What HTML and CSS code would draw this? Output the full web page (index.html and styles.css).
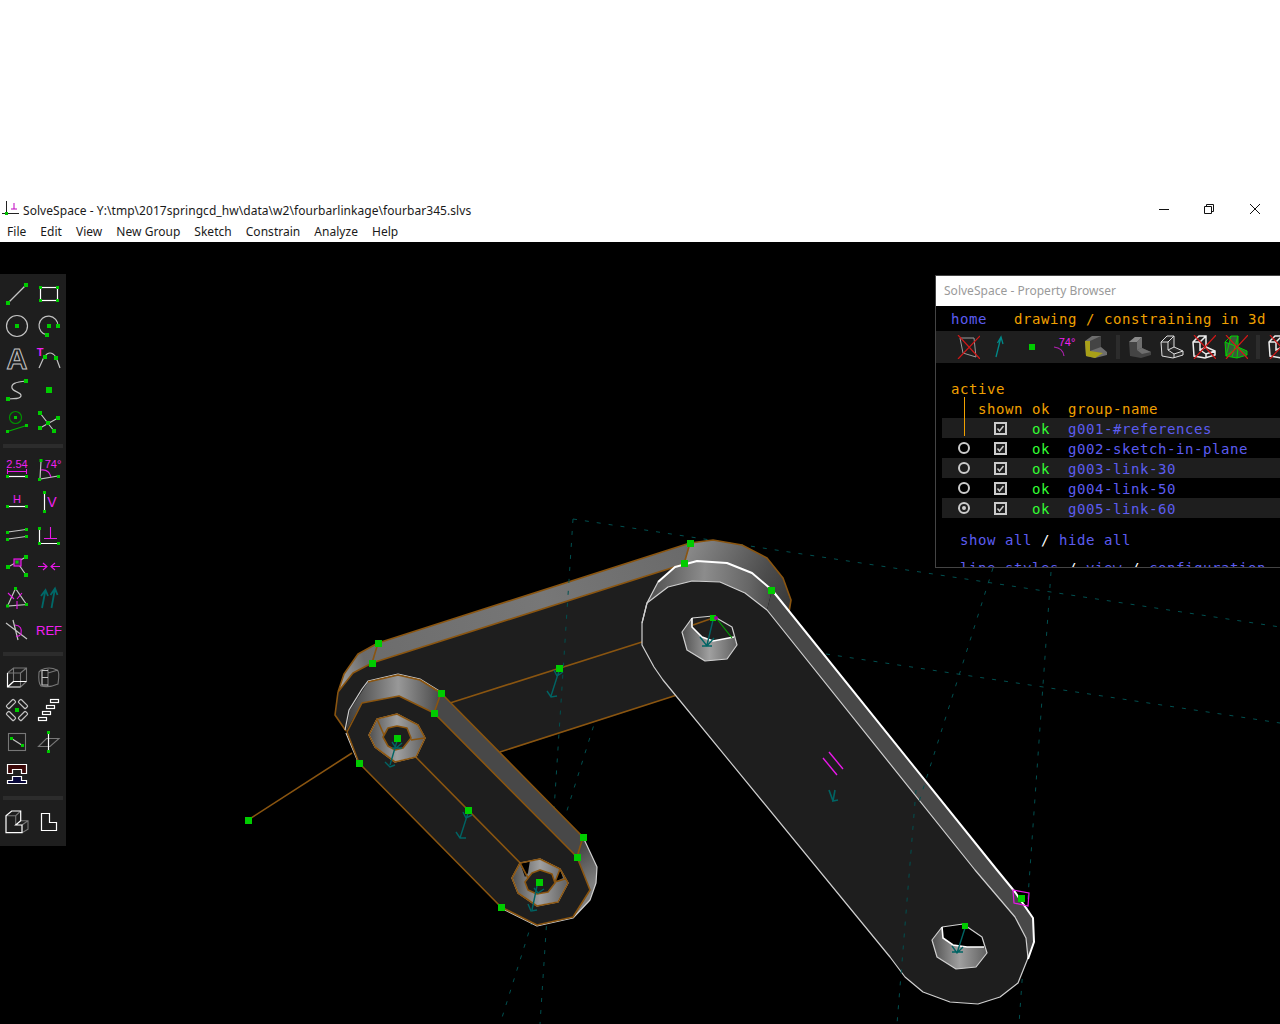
FILE: index.html
```html
<!DOCTYPE html>
<html lang="en">
<head>
<meta charset="utf-8">
<title>SolveSpace</title>
<link rel="stylesheet" href="styles.css">
</head>
<body>
<div class="blank"></div>
<div class="titlebar">
  <svg class="appicon" viewBox="0 0 20 20" width="20" height="20"><path class="ai-k" d="M5.500 1V15M1 13.500H18"/><path class="ai-m" d="M10 9H16M13 3V9"/><rect class="ai-g" x="4" y="12" width="3" height="3"/></svg>
  <span class="title">SolveSpace - Y:\tmp\2017springcd_hw\data\w2\fourbarlinkage\fourbar345.slvs</span>
  <div class="controls">
    <svg viewBox="0 0 10 10" width="10" height="10"><path class="wc" d="M0 5.500H10"/></svg>
    <svg class="wc-mid" viewBox="0 0 10 10" width="10" height="10"><path class="wc" d="M.5 2.500H7.500V9.500H.5ZM2.500 2.500V.5H9.500V7.500H7.500"/></svg>
    <svg viewBox="0 0 10 10" width="10" height="10"><path class="wc" d="M0 0L10 10M10 0L0 10"/></svg>
  </div>
</div>
<nav class="menu">
  <span>File</span><span>Edit</span><span>View</span><span>New Group</span><span>Sketch</span><span>Constrain</span><span>Analyze</span><span>Help</span>
</nav>
<main class="canvas">
  <svg class="scene" viewBox="0 242 1280 782" width="1280" height="782">
    <defs>
      <linearGradient id="gTop" gradientUnits="userSpaceOnUse" x1="340" y1="700" x2="690" y2="560"><stop offset="0" stop-color="#aaa"/><stop offset=".1" stop-color="#6c6c6c"/><stop offset=".6" stop-color="#777"/><stop offset="1" stop-color="#6a6a6a"/></linearGradient>
      <linearGradient id="gEnd" gradientUnits="userSpaceOnUse" x1="690" y1="550" x2="790" y2="600"><stop offset="0" stop-color="#888"/><stop offset=".7" stop-color="#4c4c4c"/><stop offset="1" stop-color="#3a3a3a"/></linearGradient>
      <linearGradient id="gArc" gradientUnits="userSpaceOnUse" x1="645" y1="580" x2="775" y2="590"><stop offset="0" stop-color="#4a4a4a"/><stop offset=".45" stop-color="#8c8c8c"/><stop offset=".8" stop-color="#666"/><stop offset="1" stop-color="#484848"/></linearGradient>
      <linearGradient id="gArc2" gradientUnits="userSpaceOnUse" x1="346" y1="700" x2="441" y2="700"><stop offset="0" stop-color="#3c3c3c"/><stop offset=".55" stop-color="#989898"/><stop offset="1" stop-color="#484848"/></linearGradient>
      <linearGradient id="gEnd2" gradientUnits="userSpaceOnUse" x1="578" y1="850" x2="598" y2="880"><stop offset="0" stop-color="#484848"/><stop offset="1" stop-color="#808080"/></linearGradient>
      <linearGradient id="gHole" x1="0" y1="0" x2="1" y2="0"><stop offset="0" stop-color="#505050"/><stop offset=".5" stop-color="#a0a0a0"/><stop offset="1" stop-color="#606060"/></linearGradient>
    </defs>

    <path class="grid" d="M573 519L1280 627M826 654L1280 723M1051 572L1019 1024M597 715L500 1024"/>
    <path class="bro" d="M248 820L352 753"/>

    <!-- link 50 -->
    <polygon class="face" points="372,663 684,564 700,650 678,695 440,772 360,763 346,731 335,715 338,692 353,673"/>
    <polygon fill="url(#gTop)" points="378,643 690,543 684,564 372,663 353,673 338,692 344,674 358,654"/>
    <polygon fill="url(#gEnd)" points="690,543 713,540 742,545 767,558 783,578 791,600 789,612 771,590 696,561 684,564"/>
    <path class="bro" d="M338 692L344 674L358 654L378 643L690 543L713 540L742 545L767 558L783 578L791 600L789 612M378 643L372 663L684 564L690 543M372 663L353 673L338 692L335 715L346 731M450 703L642 642M500 752L677 695"/>
    <path class="grid" d="M573 519L540 1024"/>

    <!-- link 60 -->
    <polygon class="face" points="642,623 647,603 668,587 692,581 720,582 745,593 767,610 975,870 1015,917 1026,938 1028,958 1018,983 1000,997 978,1004 950,1002 923,992 905,977 890,957 663,680 654,667 642,645"/>
    <polygon fill="url(#gArc)" points="642,623 647,603 658,582 675,567 697,561 727,563 752,573 772,590 767,610 745,593 720,582 692,581 668,587 647,603"/>
    <polygon class="strip" points="772,590 997,870 1015,892 1033,918 1034,942 1028,959 1026,938 1015,917 975,870 767,610"/>
    <polyline class="thin" points="642,623 647,603 668,587 692,581 720,582 745,593 767,610 975,870 1015,917 1026,938 1028,958 1018,983 1000,997 978,1004 950,1002 923,992 905,977 890,957 663,680 654,667 642,645 642,623"/>
    <polyline class="thick" points="658,582 675,567 697,561 727,563 752,573 772,590 997,870 1015,892 1033,918 1034,942 1028,959"/>
    <polyline class="thin" points="642,623 647,603 658,582"/>
    <path class="grid" d="M993 568L918 805M916 790L897 1024"/>

    <polygon fill="url(#gHole)" points="692,618 682,632 687,650 705,661 727,659 737,645 734,637 713,641 702,637 692,627"/>
    <polygon class="face" points="692,618 713,616 732,627 734,637 713,641 702,637 692,627"/>
    <polyline class="thin" points="692,618 682,632 687,650 705,661 727,659 737,645 732,627 713,616 692,618"/>
    <polyline class="thick-s" points="692,618 692,627 702,637 713,641 734,637"/>
    <path class="bro" d="M693 625L713 618"/>
    <path class="gl" d="M717 619L732 638"/>
    <path class="ar" d="M713 620L707 645M700 637L707 646L714 638M702 646H712"/>
    <rect class="pt" x="710" y="615" width="6" height="6"/><circle class="mg" cx="716" cy="618" r="2"/>

    <polygon fill="url(#gHole)" points="942,927 932,940 937,957 956,969 976,967 987,953 984,947 967,947 943,938"/>
    <polygon class="blk" points="942,927 963,924 982,937 984,947 967,947 953,945 943,938"/>
    <polyline class="thin" points="942,927 932,940 937,957 956,969 976,967 987,953 982,937 963,924 942,927"/>
    <polyline class="thick-s" points="942,927 943,938 953,945 967,947 984,947"/>
    <path class="ar" d="M965 928L957 953M952 946L957 953L963 947M952 952H963"/>
    <rect class="pt" x="962" y="923" width="6" height="6"/>

    <path class="mgl" d="M823 758L837 775M829 752L843 769"/>
    <path class="ar1" d="M829 790L833 801M835 790L833 801L838 800"/>
    <polygon class="mgb" points="1013,890 1029,893 1028,906 1014,903"/>

    <!-- link 30 -->
    <polygon class="face" points="347,732 362,703 399,696 434,713 577,857 590,890 573,917 537,925 501,907 359,763"/>
    <polygon fill="url(#gArc2)" points="346,731 350,710 363,690 368,682 398,675 420,680 441,693 434,713 399,696 362,703"/>
    <polygon class="strip" points="441,693 583,837 577,857 434,713"/>
    <polygon fill="url(#gEnd2)" points="583,837 597,867 596,883 590,900 573,918 590,890 577,857"/>
    <path class="thin" d="M345 730L349 710L362 689L368 681L398 674L420 679L441 692M583 837L597 867L596 883L590 900L573 918L537 926L501 908M359 764L346 733"/>
    <path class="bro" d="M347 732L362 703L399 696L434 713L577 857L590 890L573 917L537 925L501 907L359 763L347 732M441 693L583 837L577 857M441 693L434 713M368 682L398 675L420 680L441 693M397 738L539 882"/>

    <polygon fill="url(#gHole)" points="369,735 377,719 397,714 418,725 425,738 416,757 395,762 375,747"/>
    <polygon class="face" points="383,737 388,728 397,726 407,728 411,738 403,748 395,750 388,746"/>
    <path class="thin" d="M369 735L377 719L397 714L418 725L425 738L416 757L395 762L375 747Z"/>
    <path class="bro" d="M369 735L377 719L397 714L418 725L425 738L416 757L395 762L375 747ZM383 737L388 728L397 726L407 728L411 738L403 748L395 750L388 746ZM377 719L384 735M418 725L425 738L411 740"/>
    <path class="ar" d="M397 741L390 765M385 762L390 767L395 765M392 742L396 748L402 743M392 748H402"/>
    <rect class="pt" x="394" y="735" width="7" height="7"/>

    <polygon fill="url(#gHole)" points="512,878 520,863 540,859 560,869 568,883 558,902 537,906 518,893"/>
    <polygon class="blk" points="520,863 530,860 528,873 525,877"/>
    <polygon class="blk" points="560,869 555,882 563,878"/>
    <polygon class="face" points="525,882 532,873 540,870 552,874 555,883 548,892 537,894 528,890"/>
    <path class="thin" d="M512 878L520 863L540 859L560 869L568 883L558 902L537 906L518 893Z"/>
    <path class="bro" d="M512 878L520 863L540 859L560 869L568 883L558 902L537 906L518 893ZM525 882L532 873L540 870L552 874L555 883L548 892L537 894L528 890ZM520 863L528 878M560 869L555 882L565 879"/>
    <path class="ar" d="M537 886L532 910M528 904L531 911L537 910M534 888L538 893L544 889"/>
    <rect class="pt" x="536" y="879" width="7" height="7"/>

    <path class="ar" d="M468 813L460 838M456 832L460 838L466 838M463 812L466 818L472 815"/>
    <path class="ar" d="M559 671L551 696M547 691L551 697L557 696M554 670L557 676L563 672"/>

    <rect class="pt" x="245" y="817" width="7" height="7"/>
    <rect class="pt" x="687" y="540" width="7" height="7"/>
    <rect class="pt" x="681" y="560" width="7" height="7"/>
    <rect class="pt" x="375" y="640" width="7" height="7"/>
    <rect class="pt" x="369" y="660" width="7" height="7"/>
    <rect class="pt" x="768" y="587" width="7" height="7"/>
    <rect class="pt" x="438" y="690" width="7" height="7"/>
    <rect class="pt" x="431" y="710" width="7" height="7"/>
    <rect class="pt" x="356" y="760" width="7" height="7"/>
    <rect class="pt" x="556" y="665" width="7" height="7"/>
    <rect class="pt" x="465" y="807" width="7" height="7"/>
    <rect class="pt" x="580" y="834" width="7" height="7"/>
    <rect class="pt" x="574" y="854" width="7" height="7"/>
    <rect class="pt" x="498" y="904" width="7" height="7"/>
    <rect class="pt" x="1018" y="895" width="7" height="7"/>
  </svg>

  <aside class="toolbar">
    <div class="tgroup">
      <svg viewBox="0 0 32 32"><path class="ic" d="M7 25L25 7"/><rect class="pt" x="5" y="23" width="4" height="4"/><rect class="pt" x="23" y="5" width="4" height="4"/></svg>
      <svg viewBox="0 0 32 32"><rect class="iw" x="7.500" y="9.500" width="17" height="13"/><rect class="pt" x="6" y="8" width="3" height="3"/><rect class="pt" x="23" y="8" width="3" height="3"/><rect class="pt" x="6" y="21" width="3" height="3"/><rect class="pt" x="23" y="21" width="3" height="3"/></svg>
      <svg viewBox="0 0 32 32"><circle class="ic" cx="16" cy="16" r="10.500"/><rect class="pt" x="14" y="14" width="4" height="4"/></svg>
      <svg viewBox="0 0 32 32"><path class="ic" d="M25 16A9.500 9.500 0 1 0 14 25"/><rect class="pt" x="14" y="14" width="4" height="4"/><rect class="pt" x="23" y="14" width="4" height="4"/><rect class="pt" x="12" y="23" width="4" height="4"/></svg>
      <svg viewBox="0 0 32 32"><text class="ta" x="16" y="27">A</text></svg>
      <svg viewBox="0 0 32 32"><text class="tm tt" x="7" y="14">T</text><path class="ic" d="M6 26L11 15Q17 7 23 15L27 26"/><rect class="pt" x="10" y="13" width="4" height="4"/><rect class="pt" x="21" y="14" width="4" height="4"/></svg>
      <svg viewBox="0 0 32 32"><path class="ic" d="M25 7C14 8 10 10 11 14C12 18 21 18 20 22C19 26 12 24 7 25"/><rect class="pt" x="23" y="5" width="4" height="4"/><rect class="pt" x="5" y="23" width="4" height="4"/></svg>
      <svg viewBox="0 0 32 32"><rect class="pt" x="13" y="13" width="6" height="6"/></svg>
      <svg viewBox="0 0 32 32"><circle class="idg" cx="14.500" cy="11.500" r="6"/><rect class="pt" x="13" y="10" width="3" height="3"/><path class="igl" d="M6.500 25.500L25.500 19.500"/><rect class="pt" x="5" y="24" width="3" height="3"/><rect class="pt" x="24" y="18" width="3" height="3"/></svg>
      <svg viewBox="0 0 32 32"><path class="ic" d="M7 7L21 25M25 12L7 22"/><rect class="pt" x="5" y="5" width="4" height="4"/><rect class="pt" x="23" y="10" width="4" height="4"/><rect class="pt" x="5" y="20" width="4" height="4"/><rect class="pt" x="19" y="23" width="4" height="4"/><rect class="pt" x="13" y="15" width="4" height="4"/></svg>
    </div>
    <div class="tsep"></div>
    <div class="tgroup">
      <svg viewBox="0 0 32 32"><text class="tm ts" x="16" y="14">2.54</text><path class="im" d="M6.500 15V20M25.500 15V20M6.500 17.500H25.500"/><path class="iw" d="M7 22.500H25"/><rect class="pt" x="5" y="21" width="3" height="3"/><rect class="pt" x="24" y="21" width="3" height="3"/></svg>
      <svg viewBox="0 0 32 32"><path class="ic" d="M8 7L7 25L25 22"/><path class="im" d="M8 16Q16 15 18 23"/><text class="tm ts" x="20" y="14">74°</text><rect class="pt" x="6.500" y="5" width="3" height="3"/><rect class="pt" x="5" y="24" width="3" height="3"/><rect class="pt" x="24" y="21" width="3" height="3"/></svg>
      <svg viewBox="0 0 32 32"><text class="tm ts" x="16" y="17">H</text><path class="iw" d="M7 20.500H25"/><rect class="pt" x="5" y="19" width="3" height="3"/><rect class="pt" x="24" y="19" width="3" height="3"/></svg>
      <svg viewBox="0 0 32 32"><path class="iw" d="M11.500 7V25"/><text class="tm tv" x="19" y="21">V</text><rect class="pt" x="10" y="5" width="3" height="3"/><rect class="pt" x="10" y="24" width="3" height="3"/></svg>
      <svg viewBox="0 0 32 32"><path class="ic" d="M7 14L25 11.500M7 21L25 18.500"/><rect class="pt" x="5" y="13" width="3" height="3"/><rect class="pt" x="24" y="10" width="3" height="3"/><rect class="pt" x="5" y="20" width="3" height="3"/><rect class="pt" x="24" y="17" width="3" height="3"/></svg>
      <svg viewBox="0 0 32 32"><path class="iw" d="M6.500 10V25.500H25"/><path class="im" d="M11 20.500H24M17.500 9V20.500"/><rect class="pt" x="5" y="9" width="3" height="3"/><rect class="pt" x="5" y="24" width="3" height="3"/><rect class="pt" x="24" y="24" width="3" height="3"/></svg>
      <svg viewBox="0 0 32 32"><path class="ic" d="M7 17L25 7M16 12L25 25"/><rect class="imf" x="13" y="9" width="7" height="7"/><rect class="pt" x="14.500" y="10.500" width="3" height="3"/><rect class="pt" x="5" y="15" width="4" height="4"/><rect class="pt" x="23" y="5" width="4" height="4"/><rect class="pt" x="23" y="23" width="4" height="4"/></svg>
      <svg viewBox="0 0 32 32"><path class="im" d="M5 16.500H14M10 13L14 16.500L10 20M27 16.500H18M22 13L18 16.500L22 20"/></svg>
      <svg viewBox="0 0 32 32"><path class="ic" d="M14.500 6.500L6.500 24L25.500 22.500Z"/><path class="im" d="M7 11L13 17M21 11L16 17M16 19V27"/><rect class="pt" x="13" y="5" width="3" height="3"/><rect class="pt" x="5" y="22.500" width="3" height="3"/><rect class="pt" x="24" y="21" width="3" height="3"/></svg>
      <svg viewBox="0 0 32 32"><path class="it" d="M9 26L12.500 8M8 14L12.500 8L15 14M18.500 26L22 6.500M17.500 13L22 6.500L24.500 13"/></svg>
      <svg viewBox="0 0 32 32"><path class="ic" d="M5 9L26 25M12 6L17 26"/><path class="im" d="M14 11Q22 12 20 20Q18 23 15 22"/></svg>
      <svg viewBox="0 0 32 32"><text class="tm tr" x="16" y="21">REF</text></svg>
    </div>
    <div class="tsep"></div>
    <div class="tgroup">
      <svg viewBox="0 0 32 32"><path class="id" d="M6.500 11L12.500 6H25.500V19.500L19.500 25M6.500 11H19.500V25M19.500 11L25.500 6M12.500 6V19.500L6.500 25"/><path class="iw" d="M6.500 11V25H19.500M6.500 25L12.500 19.500H25.500"/></svg>
      <svg viewBox="0 0 32 32"><path class="id" d="M8 8Q16 4 24 8Q27 9 25 22Q16 26 8 24Q5 21 6 10ZM15 7V24M25 8L15 11"/><path class="ic" d="M15 8.500H9V23H15M9 15.500H15"/></svg>
      <svg viewBox="0 0 32 32"><rect class="ic" x="5" y="8" width="10" height="4" rx="1" transform="rotate(-45 10 10)"/><rect class="ic" x="17" y="8" width="10" height="4" rx="1" transform="rotate(45 22 10)"/><rect class="ic" x="5" y="20" width="10" height="4" rx="1" transform="rotate(45 10 22)"/><rect class="ic" x="17" y="20" width="10" height="4" rx="1" transform="rotate(-45 22 22)"/><rect class="pt" x="14" y="14" width="4" height="4"/></svg>
      <svg viewBox="0 0 32 32"><rect class="iw" x="5.500" y="23.500" width="8" height="3"/><rect class="iw" x="9.500" y="17.500" width="8" height="3"/><rect class="iw" x="13.500" y="11.500" width="8" height="3"/><rect class="iw" x="17.500" y="5.500" width="8" height="3"/></svg>
      <svg viewBox="0 0 32 32"><rect class="id" x="7.500" y="7.500" width="17" height="17"/><path class="ic" d="M10.500 12.500L21.500 19.500"/><rect class="pt" x="9" y="11" width="3" height="3"/><rect class="pt" x="20" y="18" width="3" height="3"/></svg>
      <svg viewBox="0 0 32 32"><path class="id" d="M5.500 20.500L13.500 12.500H26L17 20.500Z"/><path class="iw" d="M15.500 7V25"/><rect class="pt" x="14" y="5" width="3" height="3"/><rect class="pt" x="14" y="24" width="3" height="3"/></svg>
      <svg viewBox="0 0 32 32"><path class="ired" d="M6.500 6.500H25.500V15.500H20.500V11.500H11.500V15.500H6.500Z"/><path class="iblu" d="M11.500 18.500H20.500V22.500H25.500V25.500H6.500V22.500H11.500Z"/></svg>
      <span class="tempty"></span>
    </div>
    <div class="tsep"></div>
    <div class="tgroup">
      <svg viewBox="0 0 32 32"><path class="id" d="M5 9.700H14.700L19.700 5M14.700 9.700V19M19.700 14.700H27V23.300L21 26.700M21 19L27 14.700"/><path class="iw" d="M5 9.700L10.700 5H19.700V14.700L14.700 19H21V26.700H5Z"/></svg>
      <svg viewBox="0 0 32 32"><path class="iw" d="M8.500 7.500H16.500V16.500H23.500V24.500H8.500Z"/></svg>
    </div>
  </aside>

  <section class="browser">
    <header class="b-title">SolveSpace - Property Browser</header>
    <div class="b-body">
      <div class="b-nav"><span class="link">home</span><span class="ora b-head">drawing / constraining in 3d</span></div>
      <div class="b-icons">
        <svg viewBox="0 0 24 24"><path class="bg" d="M4 3H18L20 22L7 18Z"/><path class="xr" d="M2 0L24 24M24 1L2 24"/></svg>
        <svg viewBox="0 0 24 24"><path class="bt" d="M8 22L13 2M9.500 8L13 2L15 9"/></svg>
        <svg viewBox="0 0 24 24"><rect class="pt" x="9" y="9" width="6" height="6"/></svg>
        <svg viewBox="0 0 24 24"><path class="bm" d="M2 12Q11 13 12 21"/><text class="tm b74" x="15" y="11">74°</text></svg>
        <svg viewBox="0 0 24 24"><polygon class="s-gr" points="1,6 8,1 17,1 17,12 23,17 23,20 11,23 2,21"/><polygon class="s-dk" points="6,6 17,1 17,12 6,16"/><polygon class="s-yd" points="1,6 6,6 6,16 19,18 11,23 2,21"/></svg>
        <span class="b-sep"></span>
        <svg viewBox="0 0 24 24"><polygon class="s-dk" points="1,7 7,2 14,2 14,13 23,17 23,20 13,23 2,21"/><polygon class="s-lt" points="7,2 14,2 9,7 1,7"/><polygon class="s-gr" points="9,7 14,2 14,13 9,15"/><polygon class="s-gr" points="9,15 14,13 23,17 14,19"/></svg>
        <svg viewBox="0 0 24 24"><path class="s-wh" d="M1 7L7 1H14V12L23 16V20L13 23L2 21ZM1 7H8L14 1M8 7V15L14 12M8 15L14 19L23 16M14 19V23"/></svg>
        <svg viewBox="0 0 24 24"><path class="s-wt" d="M1 7L7 1H14V12L23 16V20L13 23L2 21ZM1 7H8L14 1M8 7V15L14 12M8 15L14 19L23 16M14 19V23"/><path class="xr" d="M2 0L24 24M24 0L2 24"/></svg>
        <svg viewBox="0 0 24 24"><path class="s-gn" d="M1 7L7 1H14V12L23 16V20L13 23L2 21ZM1 7L14 12L2 21L7 1M14 1L8 22M13 23L14 12L23 20"/><path class="xr" d="M2 0L24 24M24 0L2 24"/></svg>
        <span class="b-sep"></span>
        <svg viewBox="0 0 24 24"><path class="s-wt" d="M1 7L7 1H14V12L23 16V20L13 23L2 21ZM1 7H8L14 1M8 7V15L14 12"/><path class="xr" d="M2 0L24 24M24 0L2 24"/></svg>
      </div>
      <div class="b-active ora">active</div>
      <div class="b-row ora"><span></span><span>shown</span><span>ok</span><span>group-name</span></div>
      <div class="b-row alt"><span></span><svg class="cb" viewBox="0 0 13 13"><path class="cb-b" d="M1 1H12V12H1Z"/><path class="cb-t" d="M3.500 6.500L5.500 9L9.500 4"/></svg><span class="ok">ok</span><span class="link">g001-#references</span></div>
      <div class="b-row"><svg class="rb" viewBox="0 0 12 12"><circle class="rb-c" cx="6" cy="6" r="5"/></svg><svg class="cb" viewBox="0 0 13 13"><path class="cb-b" d="M1 1H12V12H1Z"/><path class="cb-t" d="M3.500 6.500L5.500 9L9.500 4"/></svg><span class="ok">ok</span><span class="link">g002-sketch-in-plane</span></div>
      <div class="b-row alt"><svg class="rb" viewBox="0 0 12 12"><circle class="rb-c" cx="6" cy="6" r="5"/></svg><svg class="cb" viewBox="0 0 13 13"><path class="cb-b" d="M1 1H12V12H1Z"/><path class="cb-t" d="M3.500 6.500L5.500 9L9.500 4"/></svg><span class="ok">ok</span><span class="link">g003-link-30</span></div>
      <div class="b-row"><svg class="rb" viewBox="0 0 12 12"><circle class="rb-c" cx="6" cy="6" r="5"/></svg><svg class="cb" viewBox="0 0 13 13"><path class="cb-b" d="M1 1H12V12H1Z"/><path class="cb-t" d="M3.500 6.500L5.500 9L9.500 4"/></svg><span class="ok">ok</span><span class="link">g004-link-50</span></div>
      <div class="b-row alt"><svg class="rb" viewBox="0 0 12 12"><circle class="rb-c" cx="6" cy="6" r="5"/><circle class="rb-d" cx="6" cy="6" r="2"/></svg><svg class="cb" viewBox="0 0 13 13"><path class="cb-b" d="M1 1H12V12H1Z"/><path class="cb-t" d="M3.500 6.500L5.500 9L9.500 4"/></svg><span class="ok">ok</span><span class="link">g005-link-60</span></div>
      <div class="b-line first"><span class="link">show all</span><span class="wh"> / </span><span class="link">hide all</span></div>
      <div class="b-line"><span class="link">line styles</span><span class="wh"> / </span><span class="link">view</span><span class="wh"> / </span><span class="link">configuration</span></div>
      <div class="vline"></div>
    </div>
  </section>
</main>
</body>
</html>
```
FILE: styles.css
```css
html, body { margin: 0; padding: 0; background: #fff; }
body { width: 1280px; height: 1024px; overflow: hidden; font-family: "Noto Sans", "Liberation Sans", sans-serif; }
.blank { height: 200px; }
.titlebar { height: 20px; display: flex; align-items: center; position: relative; font-size: 12px; color: #1a1a1a; }
.appicon { margin-left: 1px; flex: none; }
.title { margin-left: 2px; padding-top: 1px; letter-spacing: .055px; white-space: nowrap; }
.ai-k { stroke: #222; fill: none; stroke-width: 1; }
.ai-m { stroke: #c000c0; fill: none; stroke-width: 1; }
.ai-g { fill: #00c000; }
.controls { margin-left: auto; display: flex; gap: 35px; padding-right: 20px; padding-bottom: 2px; align-items: center; }
.wc-mid { margin-right: 1px; }
.wc { stroke: #111; fill: none; stroke-width: 1; }
.menu { height: 22px; display: flex; align-items: center; gap: 14px; padding-left: 7px; font-size: 12px; letter-spacing: .03px; color: #1a1a1a; }
.menu span { white-space: nowrap; }
.canvas { position: relative; height: 782px; background: #000; overflow: hidden; }
.scene { position: absolute; left: 0; top: 0; display: block; }

.grid { stroke: #005050; stroke-width: 1; fill: none; stroke-dasharray: 4 8; }
.face { fill: #1e1e1e; }
.blk { fill: #000; }
.strip { fill: #484848; }
.bro { stroke: #8a5510; stroke-width: 1.6; fill: none; stroke-linejoin: round; }
.thin { stroke: #d0d0d0; stroke-width: 1.2; fill: none; stroke-linejoin: round; }
.thick { stroke: #fff; stroke-width: 2; fill: none; stroke-linejoin: round; }
.thick-s { stroke: #fff; stroke-width: 1.6; fill: none; }
.gl { stroke: #00a000; stroke-width: 1.2; fill: none; }
.ar { stroke: #006464; stroke-width: 1.4; fill: none; }
.ar1 { stroke: #006464; stroke-width: 1.6; fill: none; }
.pt { fill: #00cc00; }
.mg { fill: #a000a0; }
.mgl { stroke: #e818e8; stroke-width: 1.4; fill: none; }
.mgb { stroke: #e818e8; stroke-width: 1.2; fill: none; }

.toolbar { position: absolute; left: 0; top: 32px; width: 66px; height: 572px; box-sizing: border-box; padding-top: 4px; background: #1e1e1e; }
.tgroup { display: grid; grid-template-columns: 32px 32px; margin-left: 1px; }
.tgroup svg { width: 32px; height: 32px; display: block; }
.tsep { height: 4px; margin: 6px 3px; background: #2c2c2c; }
.ic { stroke: #c4c4c4; stroke-width: 1.2; fill: none; }
.iw { stroke: #fff; stroke-width: 1.2; fill: none; }
.id { stroke: #777; stroke-width: 1.1; fill: none; }
.im { stroke: #e818e8; stroke-width: 1.1; fill: none; }
.imf { stroke: #e818e8; stroke-width: 1.2; fill: #552255; }
.it { stroke: #006868; stroke-width: 1.8; fill: none; }
.idg { stroke: #009000; stroke-width: 1.2; fill: none; }
.igl { stroke: #00b000; stroke-width: 1.2; fill: none; }
.ired { stroke: #fff; stroke-width: 1.2; fill: #3c0808; }
.iblu { stroke: #fff; stroke-width: 1.2; fill: #08083c; }
.ta { font-family: "Liberation Sans", sans-serif; font-weight: bold; font-size: 29px; text-anchor: middle; fill: #1e1e1e; stroke: #c4c4c4; stroke-width: 1; }
.tm { fill: #f020f0; font-family: "Liberation Sans", sans-serif; text-anchor: middle; }
.tt { font-size: 11px; font-weight: bold; }
.ts { font-size: 11px; }
.tv { font-size: 14px; }
.tr { font-size: 13px; }

.browser { position: absolute; left: 935px; top: 33px; right: 0; height: 293px; box-sizing: border-box; border: 1px solid #444; border-right: 0; background: #000; overflow: hidden; }
.b-title { height: 30px; line-height: 30px; background: #fff; color: #9a9a9a; font-size: 12px; letter-spacing: .02px; padding-left: 8px; }
.b-body { position: relative; font-family: "DejaVu Sans Mono", "Liberation Mono", monospace; font-size: 14px; letter-spacing: .57px; line-height: 20px; color: #f0a000; }
.b-nav { height: 25px; line-height: 26px; padding-left: 15px; display: flex; }
.b-head { margin-left: 27px; }
.b-icons { height: 32px; background: #1e1e1e; display: flex; align-items: center; gap: 8px; padding-left: 20px; overflow: hidden; letter-spacing: 0; }
.b-icons svg { width: 24px; height: 24px; flex: none; }
.b-sep { width: 4px; height: 24px; background: #2c2c2c; flex: none; }
.bg { stroke: #999; fill: none; stroke-width: 1; }
.xr { stroke: #d01818; fill: none; stroke-width: 1.2; }
.bt { stroke: #008888; fill: none; stroke-width: 1.3; }
.bm { stroke: #b020b0; fill: none; stroke-width: 1.2; }
.b74 { font-size: 11px; }
.s-dk { fill: #444; }
.s-lt { fill: #8a8a8a; }
.s-gr { fill: #6e6e6e; }
.s-yd { fill: #a8a018; }
.s-wh { stroke: #ddd; stroke-width: 1; fill: #2c2c2c; }
.s-wt { stroke: #eee; stroke-width: 1.5; fill: #222; }
.s-gn { stroke: #00d000; stroke-width: 1; fill: #3a5a3a; }
.b-active { height: 20px; margin-top: 15px; padding-left: 15px; line-height: 23px; }
.b-row { height: 20px; margin-left: 6px; display: grid; grid-template-columns: 36px 54px 36px 1fr; align-items: center; }
.b-row span { align-self: start; line-height: 23px; height: 20px; }
.alt { background: #1e1e1e; }
.rb { width: 12px; height: 12px; margin-left: 16px; display: block; }
.cb { width: 13px; height: 13px; margin-left: 16px; display: block; }
.rb-c { fill: none; stroke: #ccc; stroke-width: 2; }
.rb-d { fill: #ccc; }
.cb-b { fill: #1e1e1e; stroke: #ccc; stroke-width: 2; }
.cb-t { fill: none; stroke: #ccc; stroke-width: 1.5; }
.ok { color: #33ff33; }
.link { color: #5c5cf0; }
.wh { color: #fff; white-space: pre; }
.b-line { height: 20px; margin-top: 8px; padding-left: 24px; line-height: 22px; }
.b-line.first { margin-top: 11px; }
.vline { position: absolute; left: 28px; top: 91px; width: 1px; height: 39px; background: #f0a000; }
.tempty { display: block; }
```
